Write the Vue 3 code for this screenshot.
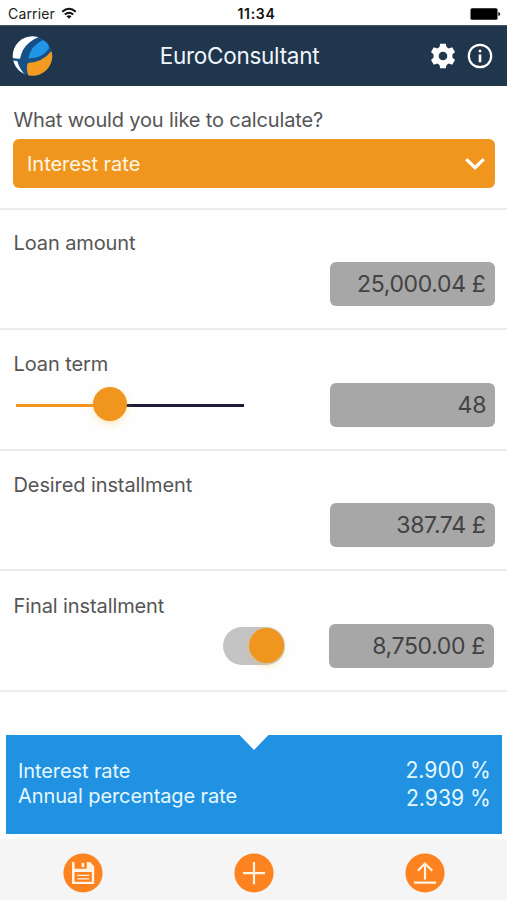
<script setup>
import { ref } from 'vue'

const loanAmount = ref('25,000.04 £')
const loanTerm = ref(48)
const sliderPercent = ref(41.2)
const installment = ref('387.74 £')
const finalInstallment = ref('8,750.00 £')
const finalEnabled = ref(true)
</script>

<template>
  <div class="screen">
    <div class="status">
      <div class="carrier">
        <span>Carrier</span>
        <svg width="16" height="13" viewBox="0 0 16 13" fill="none" stroke="#111" stroke-width="2">
          <path d="M1.2 4.8Q8 -1.2 14.8 4.8" />
          <path d="M3.8 7.6Q8 4 12.2 7.6" />
          <path d="M8 11.8L5.5 9.2Q8 7.2 10.5 9.2Z" fill="#111" stroke="none" />
        </svg>
      </div>
      <span class="clock">11:34</span>
      <svg class="battery" width="31" height="12" viewBox="0 0 31 12">
        <rect x="0.5" y="0.3" width="27" height="11.4" rx="1.5" />
        <path d="M28.4 4Q30.2 4.4 30.2 6T28.4 8Z" />
      </svg>
    </div>

    <header class="header">
      <svg class="logo" width="41" height="41" viewBox="0 0 41 41">
        <defs>
          <clipPath id="ball"><circle cx="20.5" cy="20" r="19.8" /></clipPath>
        </defs>
        <g clip-path="url(#ball)">
          <rect width="41" height="41" fill="#155087" />
          <path d="M0 0H29Q16 5 11 14Q9 18 8 22.8Q4 22.7 0 22Z" fill="#fff" />
          <path d="M0 24.3L5.5 25.2Q7 33 14.5 40H0Z" fill="#fff" />
          <path d="M16.5 22.6Q18 10 31 4Q38 8 36.8 12.5Q31 22 16.5 22.6Z" fill="#2196e8" />
          <path d="M15.8 27Q31 26 38.5 16L41 15V41H17Q13.5 34 15.8 27Z" fill="#f39a20" />
        </g>
      </svg>
      <h1 class="title">EuroConsultant</h1>
      <div class="actions">
        <svg width="26" height="26" viewBox="0 0 26 26">
          <path fill="#fff" fill-rule="evenodd" d="M10.2 .7H15.8L16.5 4.1L18.8 5.4L22.2 4.2L25 9L22.4 11.4V14.6L25 17L22.2 21.8L18.8 20.6L16.5 21.9L15.8 25.3H10.2L9.5 21.9L7.2 20.6L3.8 21.8L1 17L3.6 14.6V11.4L1 9L3.8 4.2L7.2 5.4L9.5 4.1ZM13 8.7A4.3 4.3 0 1 0 13 17.3A4.3 4.3 0 1 0 13 8.7Z" />
        </svg>
        <svg width="26" height="26" viewBox="0 0 26 26">
          <circle cx="13" cy="13" r="11.2" fill="none" stroke="#fff" stroke-width="2.2" />
          <path d="M11.7 6.7H14.3V9.2H11.7ZM11.7 11.5H14.3V19.2H11.7Z" fill="#fff" />
        </svg>
      </div>
    </header>

    <main>
      <section class="choice">
        <div class="label question">What would you like to calculate?</div>
        <div class="select">
          <span>Interest rate</span>
          <svg width="20" height="14" viewBox="0 0 20 14" fill="none" stroke="#fff" stroke-width="3.2">
            <path d="M1.2 2.2L10 10.7L18.8 2.2" />
          </svg>
        </div>
      </section>

      <section class="row">
        <div class="label">Loan amount</div>
        <div class="controls"><div class="field">{{ loanAmount }}</div></div>
      </section>

      <section class="row">
        <div class="label">Loan term</div>
        <div class="controls spread">
          <div class="slider">
            <div class="done" :style="{ width: sliderPercent + '%' }"></div>
            <div class="thumb" :style="{ left: sliderPercent + '%' }"></div>
          </div>
          <div class="field plain">{{ loanTerm }}</div>
        </div>
      </section>

      <section class="row">
        <div class="label">Desired installment</div>
        <div class="controls"><div class="field">{{ installment }}</div></div>
      </section>

      <section class="row last">
        <div class="label">Final installment</div>
        <div class="controls">
          <div class="toggle" :class="{ on: finalEnabled }"><div class="knob"></div></div>
          <div class="field">{{ finalInstallment }}</div>
        </div>
      </section>
    </main>

    <div class="result">
      <div class="names">
        <div>Interest rate</div>
        <div>Annual percentage rate</div>
      </div>
      <div class="values">
        <div>2.900 %</div>
        <div>2.939 %</div>
      </div>
    </div>

    <footer class="footer">
      <svg width="40" height="40" viewBox="0 0 40 40">
        <circle cx="20" cy="20" r="19.6" fill="#fd8321" />
        <path d="M9 9H11.6V15.8H23.8V9H27L31.2 13.2V31H9Z" fill="#fff3e3" />
        <path d="M18.6 9.8H21.2V14H18.6Z" fill="#fff3e3" />
        <path d="M11.6 19H28.8V28.8H11.6Z" fill="#fd8321" />
        <path d="M14.3 22.3H26.2M14.3 25.8H26.2" stroke="#fff3e3" stroke-width="1.3" />
      </svg>
      <svg width="40" height="40" viewBox="0 0 40 40">
        <circle cx="20" cy="20" r="19.6" fill="#fd8321" />
        <path d="M9 20.2H31M20 9V31.2" stroke="#fff3e3" stroke-width="2.2" />
      </svg>
      <svg width="40" height="40" viewBox="0 0 40 40">
        <circle cx="20" cy="20" r="19.6" fill="#fd8321" />
        <path d="M9 29.7H31M20 26.4V11M12.8 17.8L20 10.5L27.2 17.8" fill="none" stroke="#fff3e3" stroke-width="2.2" />
      </svg>
    </footer>
  </div>
</template>

<style>
body {
  margin: 0;
  background: #fefefe;
}
</style>

<style scoped>
.screen {
  display: flex;
  flex-direction: column;
  box-sizing: border-box;
  width: 507px;
  height: 900px;
  overflow: hidden;
  background: #fefefe;
  color: #555;
  font-family: Inter, "Liberation Sans", sans-serif;
  font-size: 20px;
  letter-spacing: -0.1px;
}
svg {
  display: block;
  flex: none;
}
.status {
  display: grid;
  grid-template-columns: 1fr auto 1fr;
  align-items: center;
  height: 25px;
  padding: 2px 6px 0 8px;
  box-sizing: border-box;
  font-size: 14px;
  letter-spacing: 0.15px;
  color: #222;
}
.carrier {
  display: flex;
  align-items: center;
  gap: 6.5px;
}
.clock {
  font-weight: 600;
  letter-spacing: 0.7px;
  color: #111;
  padding-left: 4px;
}
.battery {
  justify-self: end;
}
.header {
  display: grid;
  grid-template-columns: 67px 1fr 93px;
  align-items: center;
  height: 61px;
  padding: 0 14px 0 12px;
  box-sizing: border-box;
  background: #20364d;
  border-top: 1px solid #445669;
}
.title {
  margin: 0;
  padding-bottom: 2px;
  text-align: center;
  font-size: 22.5px;
  font-weight: 400;
  letter-spacing: -0.26px;
  color: #f0f6fc;
}
.actions {
  display: flex;
  justify-content: flex-end;
  gap: 11px;
}
main {
  flex: none;
}
.label {
  line-height: 24px;
  padding-left: 0.5px;
  white-space: nowrap;
}
.question {
  letter-spacing: -0.15px;
}
.choice {
  height: 123.5px;
  padding: 22px 12.5px 0 13px;
  box-sizing: border-box;
  border-bottom: 2.5px solid #ebebeb;
}
.select {
  display: flex;
  align-items: center;
  justify-content: space-between;
  height: 49px;
  margin-top: 7px;
  padding: 0 10px 0 14px;
  box-sizing: border-box;
  border-radius: 6px;
  background: #f0951d;
  color: #fff7e4;
  letter-spacing: -0.02px;
}
.row {
  height: 120.6px;
  padding: 21.9px 12.5px 0 13px;
  box-sizing: border-box;
  border-bottom: 2px solid #ebebeb;
}
.last {
  padding-top: 22.3px;
  padding-right: 13px;
}
.controls {
  display: flex;
  align-items: center;
  justify-content: flex-end;
  gap: 44.5px;
  margin-top: 6.9px;
}
.spread {
  justify-content: space-between;
  padding-left: 3px;
}
.field {
  width: 165px;
  height: 44px;
  line-height: 44px;
  padding-right: 9px;
  box-sizing: border-box;
  border-radius: 6px;
  background: #a7a7a7;
  color: #424242;
  font-size: 23px;
  letter-spacing: -0.35px;
  text-align: right;
}
.plain {
  padding-right: 8px;
  letter-spacing: 0;
}
.slider {
  position: relative;
  width: 228px;
  height: 3px;
  margin-top: 1px;
  background: #1f1c38;
}
.done {
  height: 3px;
  background: #f0951d;
}
.thumb {
  position: absolute;
  top: -17px;
  width: 34px;
  height: 34px;
  margin-left: -17px;
  border-radius: 50%;
  background: #f0951d;
  box-shadow: 0 3px 7px rgba(245, 185, 50, 0.3);
}
.toggle {
  display: flex;
  width: 62px;
  height: 38px;
  margin-top: -1px;
  padding: 1px;
  box-sizing: border-box;
  border-radius: 19px;
  background: #c4c4c4;
}
.toggle.on {
  justify-content: flex-end;
}
.knob {
  width: 35px;
  height: 35px;
  border-radius: 50%;
  background: #f0951d;
  box-shadow: 0 3px 6px rgba(245, 185, 50, 0.3);
}
.result {
  display: flex;
  justify-content: space-between;
  height: 99px;
  margin: 43px 5px 0 6px;
  padding: 0 11.5px 0 12px;
  box-sizing: border-box;
  background: #2092e1;
  color: #e6f8ff;
  clip-path: polygon(0 0, 233.5px 0, 248px 15px, 262.5px 0, 100% 0, 100% 100%, 0 100%);
}
.names {
  padding-top: 24px;
  line-height: 25px;
}
.values {
  padding-top: 22px;
  line-height: 27.7px;
  font-size: 23px;
  letter-spacing: 0;
  text-align: right;
  transform: scaleX(0.92);
  transform-origin: right;
}
.footer {
  display: grid;
  grid-template-columns: repeat(3, 171px);
  justify-content: center;
  justify-items: center;
  align-items: center;
  flex: 1;
  margin-top: 5px;
  padding-top: 8px;
  background: #f5f5f5;
}
</style>
